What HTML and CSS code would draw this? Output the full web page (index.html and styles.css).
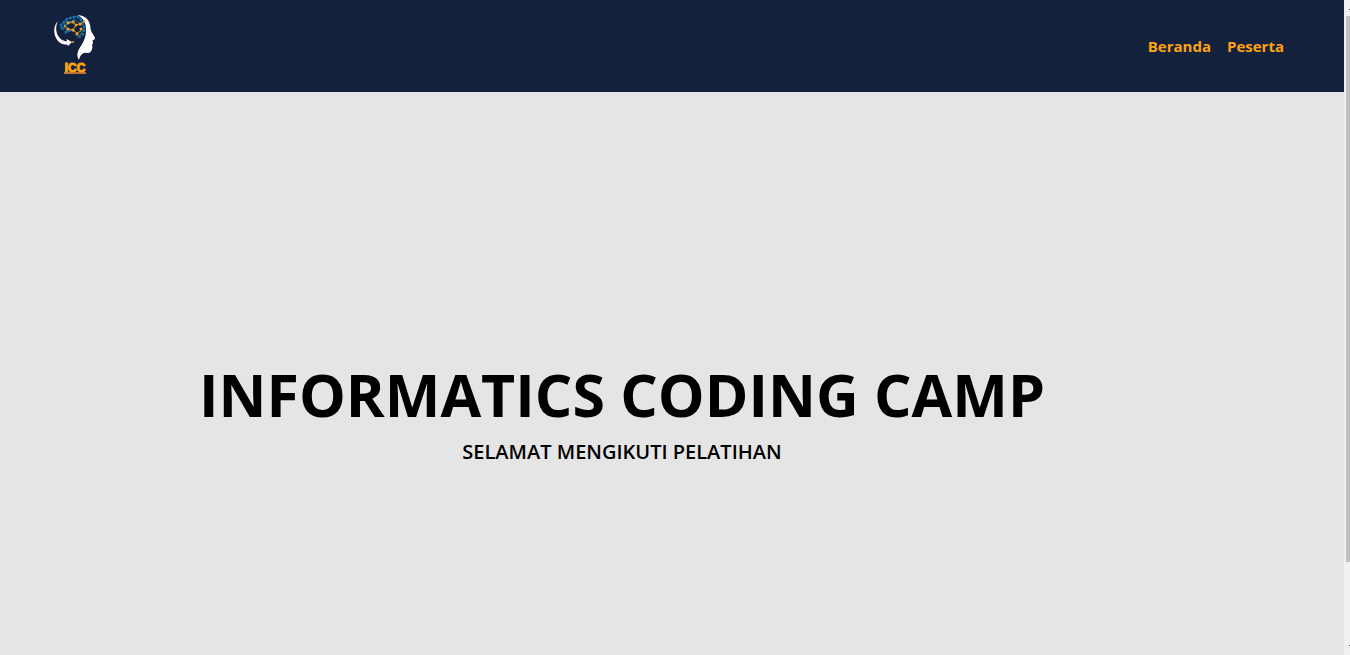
FILE: index.html
```html
<!DOCTYPE html>
<html lang="id">
<head>
<meta charset="utf-8">
<title>Informatics Coding Camp</title>
<link rel="stylesheet" href="styles.css">
</head>
<body>
<div class="page">
  <header class="navbar">
    <a class="brand" href="#" aria-label="ICC">
      <svg class="logo" viewBox="0 2 50 68">
        <path fill="#fff" d="M27 5C35 5 40 10 40.500 18C40.500 22 45 26 45 28.500C45 30 42.500 29.500 42.500 31L43 33L42 35L42.500 37C42 41 40 43.500 37 43C33 42 30 45 29 50C26 45 27.500 41 31 36C38 26 39 10 27 5Z"/>
        <path fill="#fff" d="M8 11C5 17 6 23 9 27C11 30 14 31 17 31.500L16.500 29L22 32L18 36L17 34.500C12 35 8 32 6 28C3 22 4 15 8 11Z"/>
        <g fill="none" stroke="#1b6ea3" stroke-width="1" stroke-linecap="round">
          <path d="M11 15L16 9L22 7L29 6L32 12L34 18L31 24L27 27M13 20L17 14L21 12M15 23L20 20L25 22M24 9L29 13L33 16M11 18L15 17L18 22"/>
          <path stroke-width="3" stroke-dasharray="0 4" d="M11 15L17 9L23 7L29 7L33 13L35 18L33 24L29 27M12 18L16 14L18 10M16 22L21 20M20 12L26 10"/>
        </g>
        <path fill="none" stroke="#d98d23" d="M18 13L23 12L26 15L23 20L18 19L15 16M23 20L27 23L31 21M26 15L32 13L35 10"/>
        <g fill="#f5a021">
          <circle cx="18" cy="13" r="1.500"/><circle cx="23" cy="12" r="1.500"/><circle cx="26" cy="15" r="1.500"/><circle cx="23" cy="20" r="1.500"/><circle cx="18" cy="19" r="1.500"/><circle cx="15" cy="16" r="1"/><circle cx="27" cy="24" r="1.500"/><circle cx="31" cy="19" r="1.500"/><circle cx="30" cy="14" r="1.500"/><circle cx="34" cy="11" r="1"/><circle cx="23" cy="32" r="1"/>
        </g>
        <text class="logo-text" x="25" y="62" text-anchor="middle">ICC</text>
        <path d="M14 63H36" stroke="#f08c35" stroke-width="1.500"/>
      </svg>
    </a>
    <nav class="menu">
      <a href="#beranda">Beranda</a>
      <a href="#peserta">Peserta</a>
    </nav>
  </header>
  <main class="hero">
    <h1 class="title">INFORMATICS CODING CAMP</h1>
    <p class="subtitle">SELAMAT MENGIKUTI PELATIHAN</p>
  </main>
</div>
<div class="scroll-track" aria-hidden="true">
  <span class="scroll-arrow"></span>
  <div class="scroll-thumb"></div>
  <span class="scroll-arrow"></span>
</div>
</body>
</html>
```
FILE: styles.css
```css
* { box-sizing: border-box; }
body {
  display: flex;
  min-height: 100vh;
  margin: 0;
  font-family: "Open Sans", "Noto Sans", sans-serif;
}
.page {
  display: flex;
  flex: 1;
  flex-direction: column;
  background: #e5e5e5;
}
.navbar {
  display: flex;
  align-items: center;
  justify-content: space-between;
  padding: 12px 60px 12px 50px;
  background: #14213d;
}
.brand { display: block; }
.logo {
  display: block;
  width: 50px;
  height: 68px;
}
.logo-text {
  fill: #fca311;
  stroke: #fca311;
  stroke-width: 1px;
  font: 700 12px "Liberation Sans Narrow", "Liberation Sans", sans-serif;
}
.menu {
  display: flex;
  gap: 16px;
}
.menu a {
  color: #fca311;
  font-size: 15px;
  font-weight: 700;
  line-height: 24px;
  text-decoration: none;
}
.hero {
  display: flex;
  flex: 1;
  flex-direction: column;
  align-items: center;
  justify-content: center;
  padding: 72px 100px 0 0;
  color: #000;
  text-align: center;
}
.title {
  margin: 0;
  font-size: 59px;
  font-weight: 700;
  line-height: 80px;
}
.subtitle {
  margin: 4px 0 0;
  font-size: 20px;
  font-weight: 600;
  line-height: 28px;
}
.scroll-track {
  display: flex;
  flex-direction: column;
  align-items: flex-end;
  width: 6px;
  padding: 9px 0;
  background: #f0f0f0;
}
.scroll-arrow {
  width: 1px;
  height: 1px;
  background: #505050;
}
.scroll-thumb {
  flex: 1;
  width: 4px;
  margin: 6px 0 83px;
  background: #c1c1c1;
}
```
